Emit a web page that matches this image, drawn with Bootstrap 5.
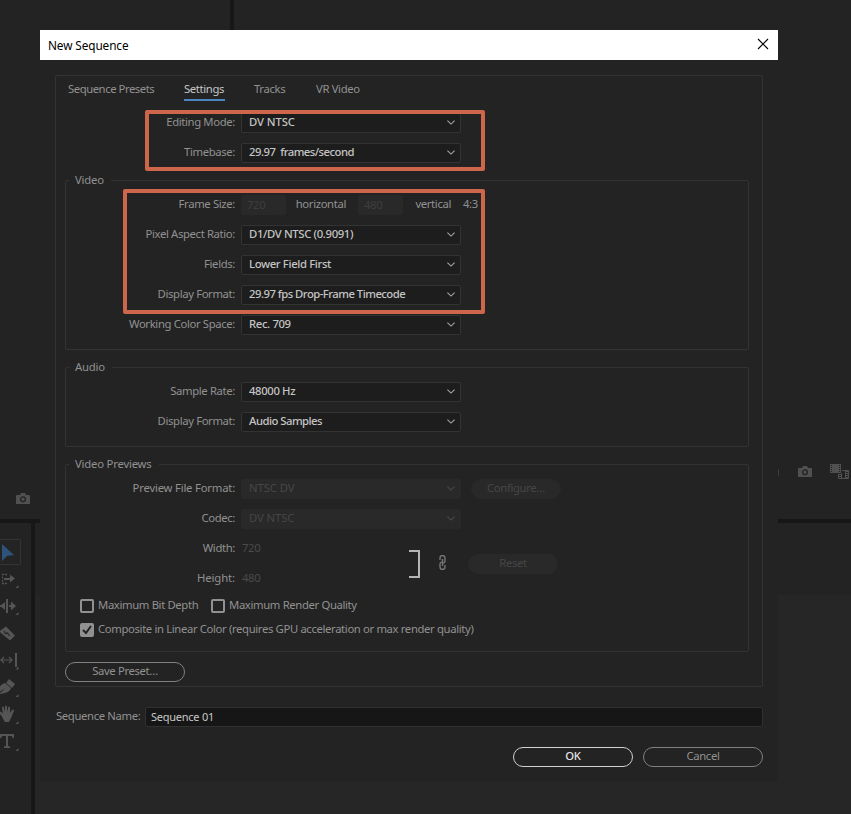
<!DOCTYPE html>
<html lang="en">
<head>
<meta charset="utf-8">
<title>New Sequence</title>
<link href="https://cdn.jsdelivr.net/npm/bootstrap@5.3.0/dist/css/bootstrap.min.css" rel="stylesheet">
<style>
body{width:851px;height:814px;overflow:hidden;background:#232323;color:#919191;font:11.3px/20px "Noto Sans","Open Sans",sans-serif;letter-spacing:-.36px;white-space:nowrap}
svg{display:block;flex:none}
.top-area{height:519px}
.pane-a{width:230px}
.bar-h{height:4px;background:#171717}
.bar-v{width:4px;background:#171717}
.bottom-area{height:291px}
.tools{width:31px}
.timeline{background:linear-gradient(#232323 72px,#262626 72px)}
.shot-a{margin:493px 0 0 16px}
.shot-b{margin:464px 2px 0 0}
.sep{width:1px;height:7px;margin:5px 19px 0 0;background:#3a3a3a}
.dialog{left:40px;top:30px;width:738px;height:752px;background:#232323}
.titlebar{height:30px;background:#fff;color:#000;padding:0 9px 0 8px;font-size:11.8px;letter-spacing:-.1px}
.panel{margin:15px 15px 0;height:612px;border:1px solid #333;border-radius:2px}
.tabs{height:37px;padding-left:12px}
.tab{height:25px;line-height:25px;margin-right:29px}
.tab.first{width:87px;letter-spacing:-.45px}
.tab.tracks{width:33px}
.tab.on{width:41px;color:#c5c5c5;border-bottom:2px solid #4b85c0}
.rows{display:flex;flex-direction:column;gap:10px}
.outer{margin-left:10px}
.line{display:flex;height:20px;align-items:center}
.lab{width:169px;margin-right:6px;text-align:right;line-height:18px;height:20px}
.tight{letter-spacing:-.52px}
.wide{letter-spacing:-.1px}
.pick{width:220px;height:20px;border:1px solid #333;border-radius:2px;background:#1d1d1d;color:#c4c4c4;padding:0 5px 0 7px;line-height:16px;display:flex;justify-content:space-between;font-weight:500}
.pick svg{margin-top:6px;stroke:#a5a5a5}
.pick.off,.numbox,.pill.off{background:#292929;border-color:#292929;color:#464646;font-weight:400}
.pick.off svg{stroke:#4a4a4a}
.numbox{width:45px;height:20px;border-radius:2px;padding-left:6px;color:#3f3f3f}
.group{position:relative;border:1px solid #333;border-radius:2px;margin:17px 13px 0 9px;padding-top:14px}
.group>.cap{position:absolute;left:3px;top:-11px;background:#232323;padding:0 7px 0 6px;line-height:20px;letter-spacing:-.2px}
.pill{width:120px;height:20px;border:1px solid #818181;border-radius:10px;text-align:center;line-height:16px}
.pill.off{width:90px}
.pill.main{border-color:#d0d0d0;color:#e0e0e0;font-weight:500}
.tick{width:14px;height:14px;border:2px solid #919191;border-radius:2px}
.tick.on{background:#919191}
.tick-text{margin-left:4px;line-height:18px;height:20px}
.name{width:618px;height:20px;border:1px solid #303030;border-radius:2px;background:#161616;color:#c8c8c8;padding-left:5px;line-height:18px;font-size:11px;letter-spacing:-.25px}
.mark-box{border:4px solid #cd664a;border-radius:2px;pointer-events:none}
.m1{left:145px;top:110px;width:340px;height:61px}
.m2{left:123px;top:189px;width:362px;height:125px}
</style>
</head>
<body class="position-relative">
<svg width="0" height="0" class="position-absolute"><defs>
<symbol id="chev" viewBox="0 0 8 5"><path d="M.4.6 4 4.1 7.6.6" fill="none" stroke-width="1.1"/></symbol>
<symbol id="cam" viewBox="0 0 14 12"><path fill="#505050" d="M1 2h3l1-2h4l1 2h3q1 0 1 1v8H0V3q0-1 1-1z"/><circle cx="7" cy="6.3" r="2.4" fill="#505050" stroke="#222" stroke-width="1.3"/></symbol>
</defs></svg>

<div class="d-flex top-area">
  <div class="pane-a"><svg class="shot-a" width="14" height="12"><use href="#cam"/></svg></div>
  <div class="bar-v"></div>
  <div class="flex-grow-1 d-flex justify-content-end">
    <div class="shot-b d-flex">
      <div class="sep"></div>
      <svg width="14" height="12" style="margin:2px 18px 0 0"><use href="#cam"/></svg>
      <svg width="19" height="16"><path fill="#505050" d="M0 0h11v9H0z"/><path d="M1.500 1v8M9.500 1v8" stroke="#222" stroke-dasharray="1 1"/><path d="M12 6.500h6.500v8H8.500V10" fill="none" stroke="#505050"/><path d="M10 10v5M17 7v8" stroke="#505050" stroke-width="2" stroke-dasharray="1 1"/><path d="M11.500 9v6M15.500 7v8" stroke="#505050"/></svg>
    </div>
  </div>
</div>
<div class="bar-h"></div>
<div class="d-flex bottom-area">
  <div class="tools"><svg width="31" height="240" fill="#555">
    <rect x="-4" y="16.500" width="24.500" height="25" rx="1" fill="#242424" stroke="#343434"/>
    <path fill="#2f5279" d="M2 21l12 11-7 1-5 5z"/>
    <path d="M2 51.500h5M2 60.500h5" stroke="#555" stroke-width="1.500" stroke-dasharray="2 1"/><path d="M2.500 53.500v2M2.500 57v2" stroke="#555"/><path d="M4 55h6v-3.500l5 4-5 4V57H4z"/>
    <path d="M6 76h2v14H6zM0 82h5v2H0zM9 82h2v-3.500l5 4.500-5 4.500V84H9zM5 79v8l-5-4z"/>
    <path d="M6 103.500l9 9-5 5-11-9z"/><path d="M4 108l1.500 2.500 2-.5 2 3" stroke="#252525" stroke-width="1.200" fill="none"/>
    <path d="M15 130h2v14h-2z"/><path d="M1 137h11M4 134l-3 3 3 3M9 134l3 3-3 3" fill="none" stroke="#555" stroke-width="1.200"/>
    <path d="M9 156l6 5-3 4-6-5zM5 160l6 5c-2 5-6 5-11 6v-1l6-5-7 4V166c1-4 3-5 6-6z"/>
    <path d="M3 196c-1-4-4-5-4-7 1-1 3 0 4 2l-1-6c0-2 2-2 2 0l1 4V184c0-2 2-2 2 0v5l1-4c0-2 2-2 2 0v5l2-3c1-1 2 0 2 1l-3 7-2 4H5z"/>
    <path d="M0 211h14v4h-1.500l-.5-2H8v10l2 .4V225H4v-1.600l2-.4V213H2l-.5 2H0z"/>
    <path d="M18.500 62v3h-3zM18.500 89v3h-3zM18.500 143.500v3h-3zM18.500 171v3h-3zM18.500 198v3h-3zM18.500 225v3h-3z"/>
  </svg></div>
  <div class="bar-v"></div>
  <div class="flex-grow-1 timeline"></div>
</div>

<div class="dialog position-absolute">
  <div class="titlebar d-flex justify-content-between align-items-center"><span>New Sequence</span>
    <svg width="12" height="12" style="margin-bottom:2px"><path d="M1 1l10 10M11 1L1 11" stroke="#000" stroke-width="1.100"/></svg></div>
  <div class="panel">
    <div class="tabs d-flex"><div class="tab first">Sequence Presets</div><div class="tab on">Settings</div><div class="tab tracks">Tracks</div><div class="tab">VR Video</div></div>
    <div class="rows outer">
      <div class="line"><div class="lab">Editing Mode:</div><div class="pick wide">DV NTSC<svg width="8" height="5"><use href="#chev"/></svg></div></div>
      <div class="line"><div class="lab">Timebase:</div><div class="pick tight">29.97&nbsp; frames/second<svg width="8" height="5"><use href="#chev"/></svg></div></div>
    </div>
    <div class="group" style="height:170px"><div class="cap">Video</div>
      <div class="rows">
        <div class="line"><div class="lab">Frame Size:</div><div class="numbox">720</div><div class="lab" style="width:60px;margin:0 12px 0 0">horizontal</div><div class="numbox">480</div><div class="lab" style="width:48px;margin:0 12px 0 0">vertical</div><div class="lab w-auto m-0">4:3</div></div>
        <div class="line"><div class="lab">Pixel Aspect Ratio:</div><div class="pick">D1/DV NTSC (0.9091)<svg width="8" height="5"><use href="#chev"/></svg></div></div>
        <div class="line"><div class="lab">Fields:</div><div class="pick">Lower Field First<svg width="8" height="5"><use href="#chev"/></svg></div></div>
        <div class="line"><div class="lab">Display Format:</div><div class="pick tight">29.97 fps Drop-Frame Timecode<svg width="8" height="5"><use href="#chev"/></svg></div></div>
        <div class="line"><div class="lab">Working Color Space:</div><div class="pick">Rec. 709<svg width="8" height="5"><use href="#chev"/></svg></div></div>
      </div>
    </div>
    <div class="group" style="height:80px"><div class="cap">Audio</div>
      <div class="rows">
        <div class="line"><div class="lab">Sample Rate:</div><div class="pick">48000 Hz<svg width="8" height="5"><use href="#chev"/></svg></div></div>
        <div class="line"><div class="lab">Display Format:</div><div class="pick tight">Audio Samples<svg width="8" height="5"><use href="#chev"/></svg></div></div>
      </div>
    </div>
    <div class="group" style="height:188px"><div class="cap">Video Previews</div>
      <div class="rows">
        <div class="line"><div class="lab" style="letter-spacing:-.2px">Preview File Format:</div><div class="pick off wide">NTSC DV<svg width="8" height="5"><use href="#chev"/></svg></div><div class="pill off" style="margin-left:10px">Configure…</div></div>
        <div class="line"><div class="lab">Codec:</div><div class="pick off wide">DV NTSC<svg width="8" height="5"><use href="#chev"/></svg></div></div>
        <div class="d-flex align-items-center">
          <div class="rows" style="width:343px">
            <div class="line"><div class="lab">Width:</div><div class="lab w-auto m-0" style="color:#4a4a4a;padding-left:1px">720</div></div>
            <div class="line"><div class="lab wide">Height:</div><div class="lab w-auto m-0" style="color:#4a4a4a;padding-left:1px">480</div></div>
          </div>
          <svg width="11" height="28"><path d="M0 1h10v26H0" fill="none" stroke="#b5b5b5" stroke-width="2"/></svg>
          <svg width="7" height="15" style="margin:0 22px 3px 19px" fill="none" stroke="#757575" stroke-width="1.400"><path d="M1 5V3a2.200 2.200 0 0 1 5 0v3a2.200 2.200 0 0 1-3 2M3.500 4v7"/><path d="M6 10v2a2.200 2.200 0 0 1-5 0V9a2.200 2.200 0 0 1 3-2"/></svg>
          <div class="pill off">Reset</div>
        </div>
      </div>
      <div class="d-flex align-items-center" style="margin:7px 0 0 14px;height:20px"><span class="tick"></span><span class="tick-text" style="width:101px;margin-right:12px">Maximum Bit Depth</span><span class="tick"></span><span class="tick-text">Maximum Render Quality</span></div>
      <div class="d-flex align-items-center" style="margin:4px 0 0 14px;height:20px"><span class="tick on"><svg width="10" height="10"><path d="M1 5l3 3 5-7" fill="none" stroke="#232323" stroke-width="2"/></svg></span><span class="tick-text">Composite in Linear Color (requires GPU acceleration or max render quality)</span></div>
    </div>
    <div class="pill" style="margin:10px 0 0 9px">Save Preset…</div>
  </div>
  <div class="d-flex justify-content-between" style="margin:20px 15px 0 16px"><span style="line-height:18px">Sequence Name:</span><div class="name">Sequence 01</div></div>
  <div class="d-flex justify-content-end" style="margin:20px 15px 0;gap:10px"><div class="pill main">OK</div><div class="pill">Cancel</div></div>
</div>
<div class="mark-box m1 position-absolute"></div>
<div class="mark-box m2 position-absolute"></div>
</body>
</html>
